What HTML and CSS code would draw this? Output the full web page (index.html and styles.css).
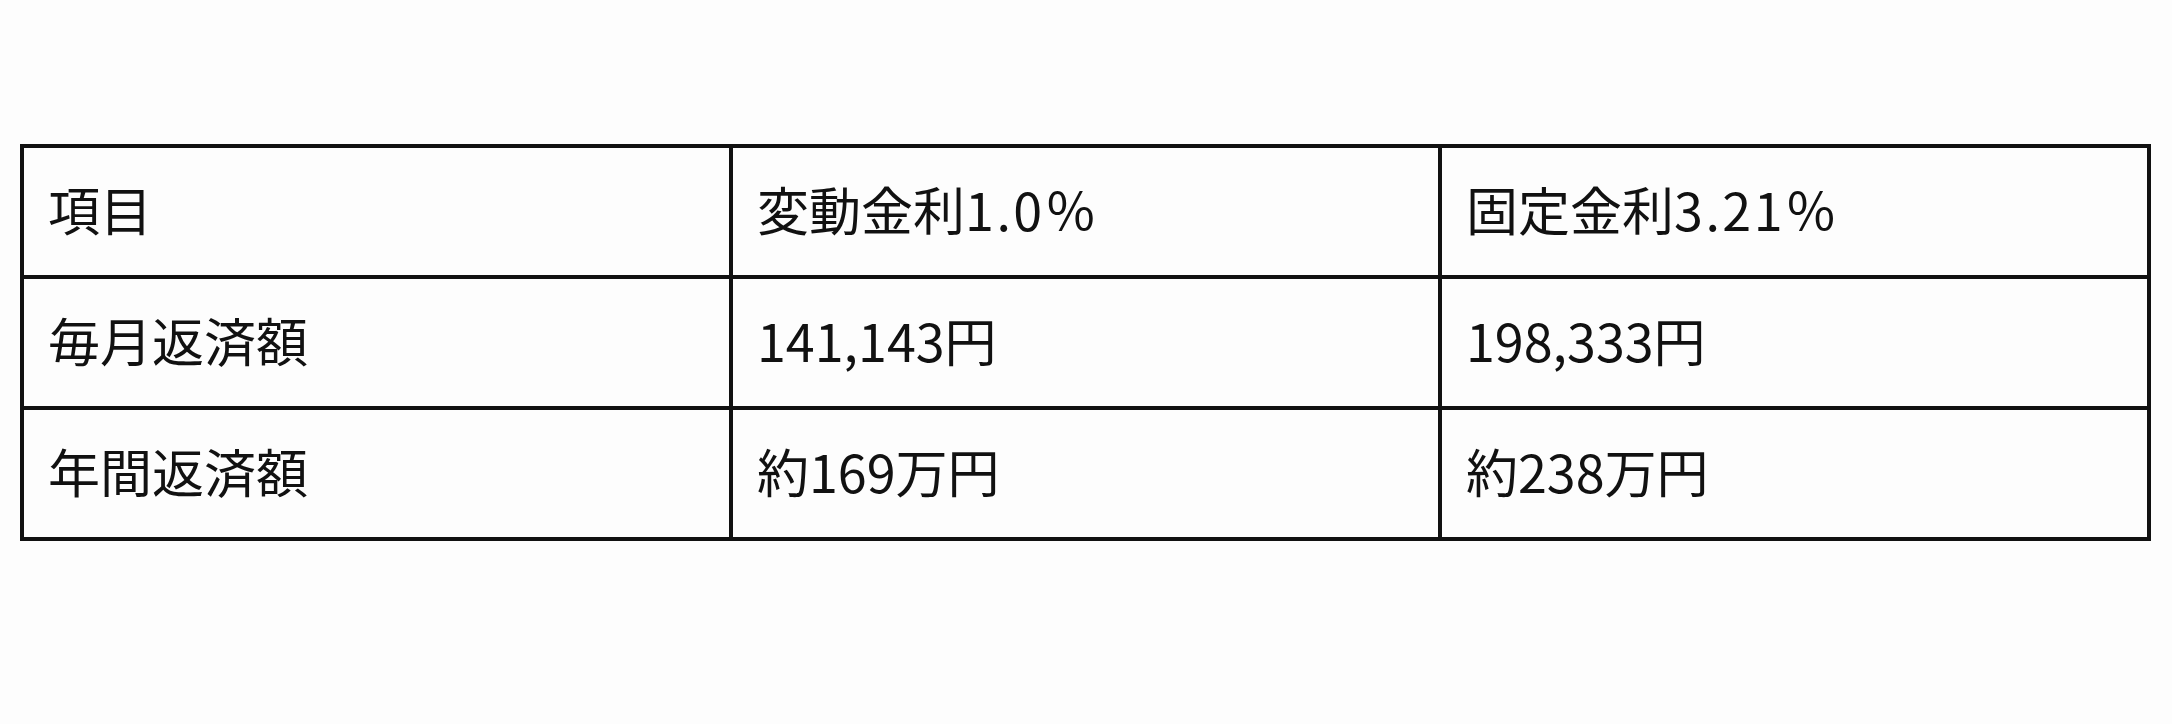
FILE: index.html
```html
<!DOCTYPE html>
<html lang="ja">
<head>
<meta charset="utf-8">
<link rel="stylesheet" href="styles.css">
</head>
<body>
<main class="page">
  <table class="rates">
    <tr>
      <td>項目</td>
      <td>変動金利<span class="rate">1.0％</span></td>
      <td>固定金利<span class="rate">3.21％</span></td>
    </tr>
    <tr>
      <td>毎月返済額</td>
      <td>141,143円</td>
      <td>198,333円</td>
    </tr>
    <tr>
      <td>年間返済額</td>
      <td>約169万円</td>
      <td>約238万円</td>
    </tr>
  </table>
</main>
</body>
</html>
```
FILE: styles.css
```css
html, body {
  margin: 0;
  padding: 0;
  background: #fdfdfd;
}
.page {
  padding: 144px 0 0 20px;
}
.rates {
  border-collapse: collapse;
  width: 2131px;
  table-layout: fixed;
  font-family: "Noto Sans CJK JP", "Noto Sans", sans-serif;
  font-size: 52px;
  font-weight: 400;
  color: #111;
}
.rates td {
  border: 4px solid #111;
  height: 131px;
  padding: 0 0 6px 24px;
  vertical-align: middle;
  box-sizing: border-box;
  line-height: 1;
}
.rate {
  letter-spacing: 2.5px;
}
```
